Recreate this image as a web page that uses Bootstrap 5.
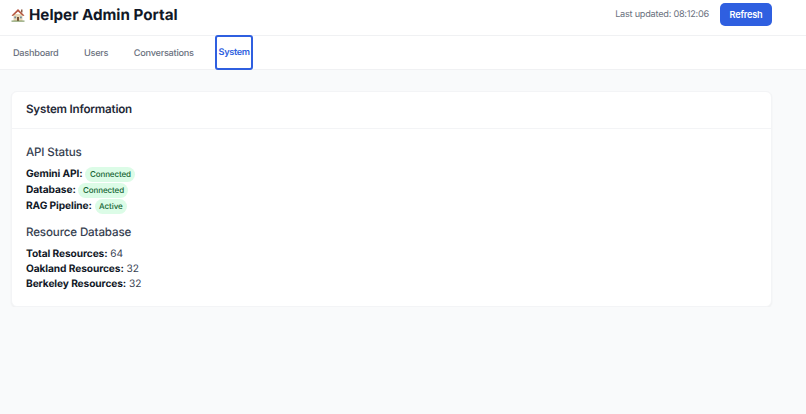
<!DOCTYPE html>
<html lang="en">
<head>
    <meta charset="UTF-8">
    <title>Helper Admin Portal</title>
    <link href="https://cdn.jsdelivr.net/npm/bootstrap@5.3.3/dist/css/bootstrap.min.css" rel="stylesheet">
    <style>
        body { background: #f9fafb; font-family: Inter, "Liberation Sans", sans-serif; color: #1f2937; overflow: hidden; text-rendering: geometricPrecision; }
        .top-bar { height: 36px; background: #fff; border-bottom: 1px solid #f0f1f3; padding: 0 34px 6px 11px; }
        .portal-title { font-size: 15.2px; font-weight: 700; line-height: 28px; color: #111827; margin: 0; }
        .updated-text { font-size: 9.2px; letter-spacing: -.25px; color: #6b7280; margin-right: 3px; }
        .refresh-btn { background: #2f5fe0; color: #fff; font-size: 9.2px; letter-spacing: -.2px; font-weight: 600; border: 0; border-radius: 5px; width: 52px; height: 23px; padding: 0; }
        .tab-bar { height: 34px; background: #fff; border-bottom: 1px solid #f0f1f3; padding-left: 13px; gap: 25.5px; }
        .tab-link { font-size: 9.2px; letter-spacing: -.27px; font-weight: 500; color: #6b7280; text-decoration: none; line-height: 35px; }
        .tab-active { color: #2f5fe0; font-weight: 600; letter-spacing: -.35px; border: 2px solid #2f5fe0; border-radius: 3px; height: 35px; line-height: 31px; width: 38px; text-align: center; margin-top: -1px; margin-left: -4px; }
        .info-card { margin: 21px 34px 0 11px; background: #fff; border: 1px solid #f3f4f6; border-radius: 6px; box-shadow: 0 1px 2px rgba(0,0,0,.05); height: 216px; }
        .info-head { height: 37px; border-bottom: 1px solid #f3f4f6; padding: 0 14px; }
        .info-head h2 { font-size: 11.6px; letter-spacing: -.2px; font-weight: 600; line-height: 34px; margin: 0; color: #1f2937; }
        .info-body { padding: 15px 14px; }
        .sect-title { font-size: 11.6px; letter-spacing: -.15px; font-weight: 500; line-height: 16px; color: #374151; margin: 0 0 6px; }
        .sect-gap { margin-top: 10px; margin-bottom: 7px; }
        .info-line { font-size: 10.2px; letter-spacing: -.1px; line-height: 16px; height: 16px; color: #374151; }
        .info-line strong { font-weight: 700; color: #111827; }
        .res-line { line-height: 15px; height: 15px; }
        .state-pill { display: inline-block; background: #dcfce7; color: #166534; font-size: 8px; letter-spacing: -.1px; font-weight: 500; line-height: 15px; padding: 0 4.5px; border-radius: 8px; vertical-align: 0; }
    </style>
</head>
<body>
    <header class="top-bar d-flex align-items-center justify-content-between">
        <div class="d-flex align-items-center gap-1">
            <svg width="14" height="14" viewBox="0 0 14 14">
                <rect x="2.5" y="6" width="9" height="7" fill="#e8d9b8"/>
                <path d="M0.5 7.5 L7 1 L13.5 7.5 L12 8 L7 3.5 L2 8 Z" fill="#b5553f"/>
                <rect x="10" y="1.5" width="1.5" height="3" fill="#8a5a44"/>
                <rect x="6" y="9" width="2" height="4" fill="#7a5236"/>
                <rect x="3.3" y="8.5" width="1.8" height="1.8" fill="#6d8aa0"/>
                <rect x="9" y="8.5" width="1.8" height="1.8" fill="#6d8aa0"/>
                <rect x="0.5" y="12.6" width="13" height="1" fill="#6d8a4e"/>
            </svg>
            <h1 class="portal-title">Helper Admin Portal</h1>
        </div>
        <div class="d-flex align-items-center gap-2">
            <span class="updated-text">Last updated: 08:12:06</span>
            <button type="button" class="refresh-btn">Refresh</button>
        </div>
    </header>
    <nav class="tab-bar d-flex">
        <a href="#" class="tab-link">Dashboard</a>
        <a href="#" class="tab-link">Users</a>
        <a href="#" class="tab-link">Conversations</a>
        <a href="#" class="tab-link tab-active">System</a>
    </nav>
    <main class="info-card">
        <div class="info-head"><h2>System Information</h2></div>
        <div class="info-body">
            <h3 class="sect-title">API Status</h3>
            <div class="info-line"><strong>Gemini API:</strong> <span class="state-pill">Connected</span></div>
            <div class="info-line"><strong>Database:</strong> <span class="state-pill">Connected</span></div>
            <div class="info-line"><strong>RAG Pipeline:</strong> <span class="state-pill">Active</span></div>
            <h3 class="sect-title sect-gap">Resource Database</h3>
            <div class="info-line res-line"><strong>Total Resources:</strong> 64</div>
            <div class="info-line res-line"><strong>Oakland Resources:</strong> 32</div>
            <div class="info-line res-line"><strong>Berkeley Resources:</strong> 32</div>
        </div>
    </main>
    <script src="https://cdn.jsdelivr.net/npm/bootstrap@5.3.3/dist/js/bootstrap.bundle.min.js"></script>
</body>
</html>
